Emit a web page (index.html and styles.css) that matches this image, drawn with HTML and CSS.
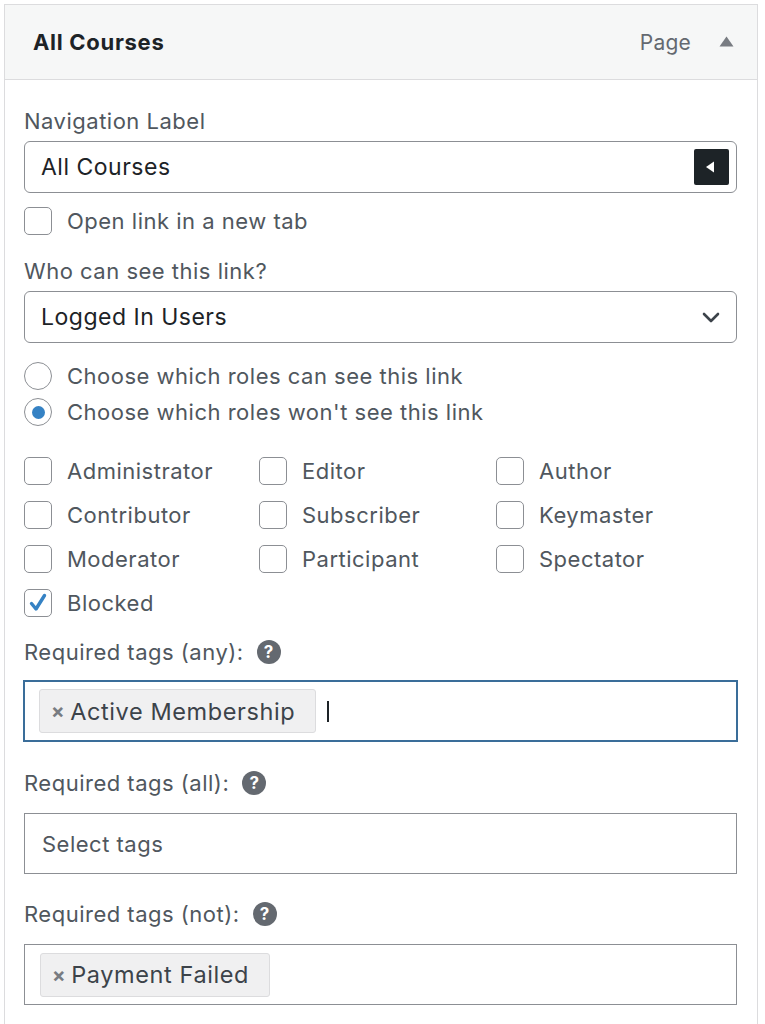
FILE: index.html
```html
<!DOCTYPE html>
<html lang="en">
<head>
<meta charset="utf-8">
<title>All Courses</title>
<link rel="stylesheet" href="styles.css">
</head>
<body>
<div class="panel">
  <div class="panel-head">
    <div class="panel-title">All Courses</div>
    <div class="panel-meta">
      <span class="panel-type">Page</span>
      <svg class="caret-up" width="15" height="11" viewBox="0 0 15 11"><path d="M7.5 0.5 L14.5 10.5 L0.5 10.5 Z" fill="#787c82"/></svg>
    </div>
  </div>
  <div class="panel-body">
    <div class="field-label lbl-nav">Navigation Label</div>
    <div class="text-input">
      <span class="input-value">All Courses</span>
      <span class="input-btn"><svg width="10" height="12" viewBox="0 0 10 12"><path d="M9 0.5 L9 11.5 L1 6 Z" fill="#ffffff"/></svg></span>
    </div>
    <div class="check-row row-newtab">
      <span class="box"></span><span class="check-text">Open link in a new tab</span>
    </div>
    <div class="field-label lbl-who">Who can see this link?</div>
    <div class="text-input select-input">
      <span class="input-value">Logged In Users</span>
      <svg class="chevron" width="18" height="11" viewBox="0 0 18 11"><path d="M2 2 L9 9 L16 2" fill="none" stroke="#3c434a" stroke-width="2.6" stroke-linecap="round" stroke-linejoin="round"/></svg>
    </div>
    <div class="check-row radio-first">
      <span class="radio"></span><span class="check-text">Choose which roles can see this link</span>
    </div>
    <div class="check-row radio-second">
      <span class="radio checked"><span class="dot"></span></span><span class="check-text">Choose which roles won't see this link</span>
    </div>
    <div class="roles">
      <div class="check-row"><span class="box"></span><span class="check-text">Administrator</span></div>
      <div class="check-row"><span class="box"></span><span class="check-text">Editor</span></div>
      <div class="check-row"><span class="box"></span><span class="check-text">Author</span></div>
      <div class="check-row"><span class="box"></span><span class="check-text">Contributor</span></div>
      <div class="check-row"><span class="box"></span><span class="check-text">Subscriber</span></div>
      <div class="check-row"><span class="box"></span><span class="check-text">Keymaster</span></div>
      <div class="check-row"><span class="box"></span><span class="check-text">Moderator</span></div>
      <div class="check-row"><span class="box"></span><span class="check-text">Participant</span></div>
      <div class="check-row"><span class="box"></span><span class="check-text">Spectator</span></div>
      <div class="check-row"><span class="box checked"><svg width="22" height="22" viewBox="0 0 22 22"><path d="M4.5 11.5 L9 17 L17.5 3.5" fill="none" stroke="#3582c4" stroke-width="3.4" stroke-linecap="round" stroke-linejoin="round"/></svg></span><span class="check-text">Blocked</span></div>
    </div>
    <div class="field-label help-label lbl-any">Required tags (any):<span class="help">?</span></div>
    <div class="tag-box focused">
      <span class="chip"><span class="chip-x">×</span>Active Membership</span>
      <span class="cursor"></span>
    </div>
    <div class="field-label help-label lbl-all">Required tags (all):<span class="help">?</span></div>
    <div class="tag-box">
      <span class="placeholder">Select tags</span>
    </div>
    <div class="field-label help-label lbl-not">Required tags (not):<span class="help">?</span></div>
    <div class="tag-box">
      <span class="chip"><span class="chip-x">×</span>Payment Failed</span>
    </div>
  </div>
</div>
</body>
</html>
```
FILE: styles.css
```css
* { box-sizing: border-box; }
html, body { margin: 0; padding: 0; background: #ffffff; }
body {
  font-family: Inter, "Liberation Sans", Arial, sans-serif;
  font-size: 22px;
  letter-spacing: 0.5px;
  color: #50575e;
  height: 1024px;
  overflow: hidden;
}
.panel {
  margin: 4px 0 0 4px;
  width: 754px;
  height: 1020px;
  border: 1px solid #dcdcde;
  border-bottom: none;
}
.panel-head {
  height: 75px;
  background: #f6f7f7;
  border-bottom: 1px solid #dcdcde;
  display: flex;
  align-items: center;
  justify-content: space-between;
  padding: 0 23px 0 28px;
}
.panel-title {
  font-weight: 700;
  font-size: 22px;
  letter-spacing: 0.7px;
  color: #1d2327;
}
.panel-meta {
  display: flex;
  align-items: center;
  gap: 28px;
}
.panel-type { color: #646970; font-size: 21px; letter-spacing: 0.2px; }
.caret-up { display: block; margin-top: -2px; }
.panel-body { padding: 0 20px 0 19px; }
.field-label {
  line-height: 28px;
  height: 28px;
  color: #50575e;
}
.lbl-nav { margin-top: 27px; }
.lbl-who { margin-top: 22px; }
.lbl-any { margin-top: 21px; }
.lbl-all { margin-top: 27px; }
.lbl-not { margin-top: 26px; }
.help-label { display: flex; align-items: center; }
.help {
  width: 24px;
  height: 24px;
  border-radius: 50%;
  background: #646970;
  color: #ffffff;
  font-weight: 700;
  font-size: 17px;
  letter-spacing: 0;
  line-height: 24px;
  text-align: center;
  margin-left: 13px;
}
.text-input {
  margin-top: 6px;
  height: 52px;
  border: 1px solid #8c8f94;
  border-radius: 6px;
  display: flex;
  align-items: center;
  justify-content: space-between;
  padding: 0 7px 0 16px;
}
.input-value { color: #1d2327; font-size: 23px; }
.input-btn {
  width: 35px;
  height: 36px;
  background: #1d2327;
  border-radius: 2px;
  display: flex;
  align-items: center;
  justify-content: center;
}
.input-btn svg { display: block; margin-left: -3px; }
.select-input { padding-right: 16px; }
.chevron { display: block; }
.check-row {
  display: flex;
  align-items: center;
  height: 28px;
}
.check-text { margin-left: 15px; color: #50575e; white-space: nowrap; }
.row-newtab { margin-top: 14px; }
.radio-first { margin-top: 19px; }
.radio-second { margin-top: 8px; }
.box {
  flex: none;
  width: 28px;
  height: 28px;
  border: 1.5px solid #8c8f94;
  border-radius: 5px;
  display: flex;
  align-items: center;
  justify-content: center;
}
.radio {
  flex: none;
  width: 28px;
  height: 28px;
  border: 1.5px solid #8c8f94;
  border-radius: 50%;
  display: flex;
  align-items: center;
  justify-content: center;
}
.dot {
  width: 13px;
  height: 13px;
  border-radius: 50%;
  background: #3582c4;
}
.roles {
  margin-top: 31px;
  display: grid;
  grid-template-columns: 235px 237px 1fr;
  row-gap: 16px;
}
.tag-box {
  margin-top: 16px;
  height: 61px;
  border: 1px solid #8c8f94;
  display: flex;
  align-items: center;
  padding: 0 15px 0 15px;
}
.tag-box.focused {
  margin-top: 14px;
  margin-left: -1px;
  margin-right: -1px;
  height: 62px;
  border: 2.5px solid #3a6d99;
  padding-left: 14px;
}
.chip {
  height: 44px;
  display: flex;
  align-items: center;
  background: #f0f0f1;
  border: 1px solid #dcdcde;
  border-radius: 3px;
  padding: 0 20px 0 11px;
  color: #3c434a;
  font-size: 23.5px;
  letter-spacing: 0.6px;
}
.chip-x {
  color: #787c82;
  font-weight: 700;
  font-size: 20px;
  margin-right: 5px;
}
.cursor {
  width: 2px;
  height: 21px;
  background: #1d2327;
  margin-left: 11px;
}
.placeholder { color: #50575e; margin-left: 2px; }
```
